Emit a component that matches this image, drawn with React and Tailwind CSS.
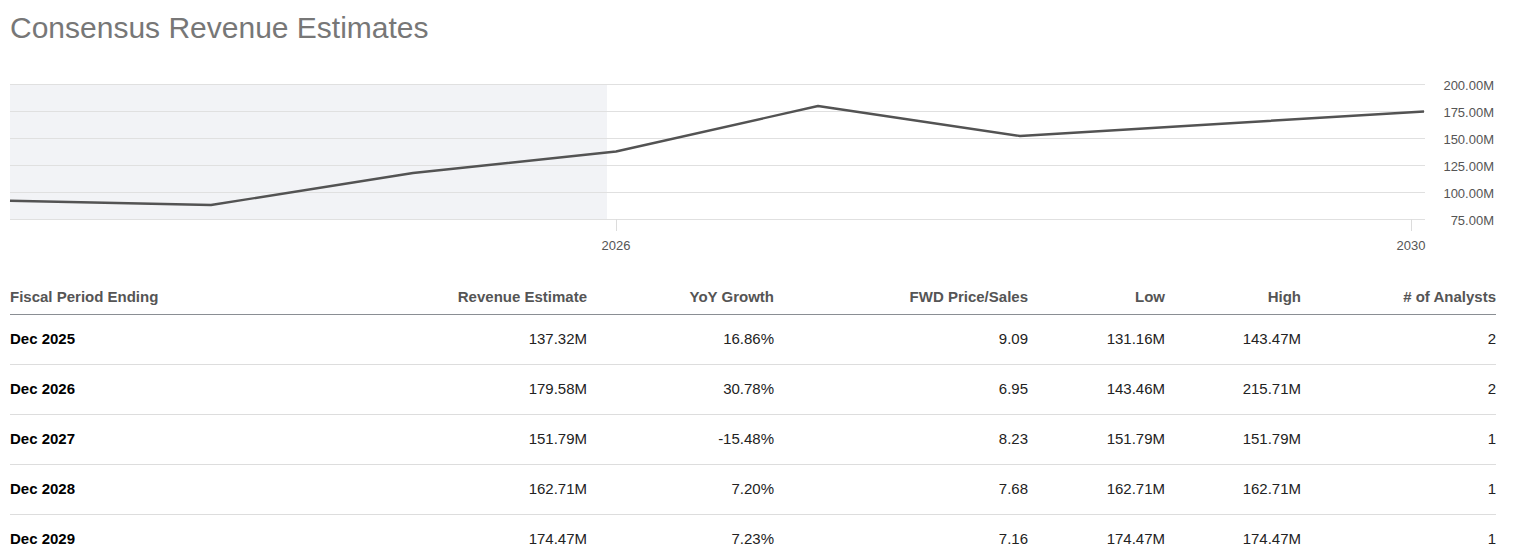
import React from 'react';

const rows = [
  { period: 'Dec 2025', rev: '137.32M', yoy: '16.86%', ps: '9.09', low: '131.16M', high: '143.47M', n: '2' },
  { period: 'Dec 2026', rev: '179.58M', yoy: '30.78%', ps: '6.95', low: '143.46M', high: '215.71M', n: '2' },
  { period: 'Dec 2027', rev: '151.79M', yoy: '-15.48%', ps: '8.23', low: '151.79M', high: '151.79M', n: '1' },
  { period: 'Dec 2028', rev: '162.71M', yoy: '7.20%', ps: '7.68', low: '162.71M', high: '162.71M', n: '1' },
  { period: 'Dec 2029', rev: '174.47M', yoy: '7.23%', ps: '7.16', low: '174.47M', high: '174.47M', n: '1' },
];

const gridY = [84, 111, 138, 165, 192, 219];
const yLabels = ['200.00M', '175.00M', '150.00M', '125.00M', '100.00M', '75.00M'];
const points = '10,200.7 211,205 413,173 616,151.5 818,106 1020,136 1222,123.7 1424,111.5';

const cols = 'grid grid-cols-[377px_200px_187px_254px_137px_136px_195px]';
const svgFont = "'Liberation Sans', Arial, sans-serif";

function Chart() {
  return (
    <svg className="block mt-[15px]" width="1522" height="200" viewBox="0 60 1522 200">
      <rect x="10" y="84" width="597" height="135" fill="#f2f3f6" />
      {gridY.map((y) => (
        <line key={y} x1="10" x2="1425" y1={y + 0.5} y2={y + 0.5} stroke="#e0e0e0" strokeWidth="1" />
      ))}
      <line x1="616.5" x2="616.5" y1="219" y2="231" stroke="#dcdcdc" />
      <line x1="1411.5" x2="1411.5" y1="219" y2="231" stroke="#dcdcdc" />
      <polyline points={points} fill="none" stroke="#535353" strokeWidth="2.4" strokeLinejoin="round" />
      {yLabels.map((t, i) => (
        <text key={t} x="1494" y={gridY[i] + 5.5} textAnchor="end" fontSize="13" fill="#555" fontFamily={svgFont}>
          {t}
        </text>
      ))}
      <text x="616" y="250" textAnchor="middle" fontSize="13" fill="#555" fontFamily={svgFont}>2026</text>
      <text x="1411" y="250" textAnchor="middle" fontSize="13" fill="#555" fontFamily={svgFont}>2030</text>
    </svg>
  );
}

export default function App() {
  return (
    <div className="bg-white w-[1522px] h-[560px] overflow-hidden font-['Liberation_Sans',Arial,sans-serif]">
      <h1 className="pt-[11px] pl-[10px] text-[30px] leading-[34px] text-[#777777] font-normal">
        Consensus Revenue Estimates
      </h1>

      <Chart />

      <div className="mt-[20px] ml-[10px] w-[1486px] text-[15px]">
        <div className={`${cols} h-[35px] items-center border-b border-[#8a8e93] font-bold text-[#555555]`}>
          <div>Fiscal Period Ending</div>
          <div className="text-right">Revenue Estimate</div>
          <div className="text-right">YoY Growth</div>
          <div className="text-right">FWD Price/Sales</div>
          <div className="text-right">Low</div>
          <div className="text-right">High</div>
          <div className="text-right"># of Analysts</div>
        </div>
        {rows.map((r) => (
          <div key={r.period} className={`${cols} h-[50px] items-center border-b border-[#dddddd] text-[#222222]`}>
            <div className="font-bold text-black">{r.period}</div>
            <div className="text-right">{r.rev}</div>
            <div className="text-right">{r.yoy}</div>
            <div className="text-right">{r.ps}</div>
            <div className="text-right">{r.low}</div>
            <div className="text-right">{r.high}</div>
            <div className="text-right">{r.n}</div>
          </div>
        ))}
      </div>
    </div>
  );
}
